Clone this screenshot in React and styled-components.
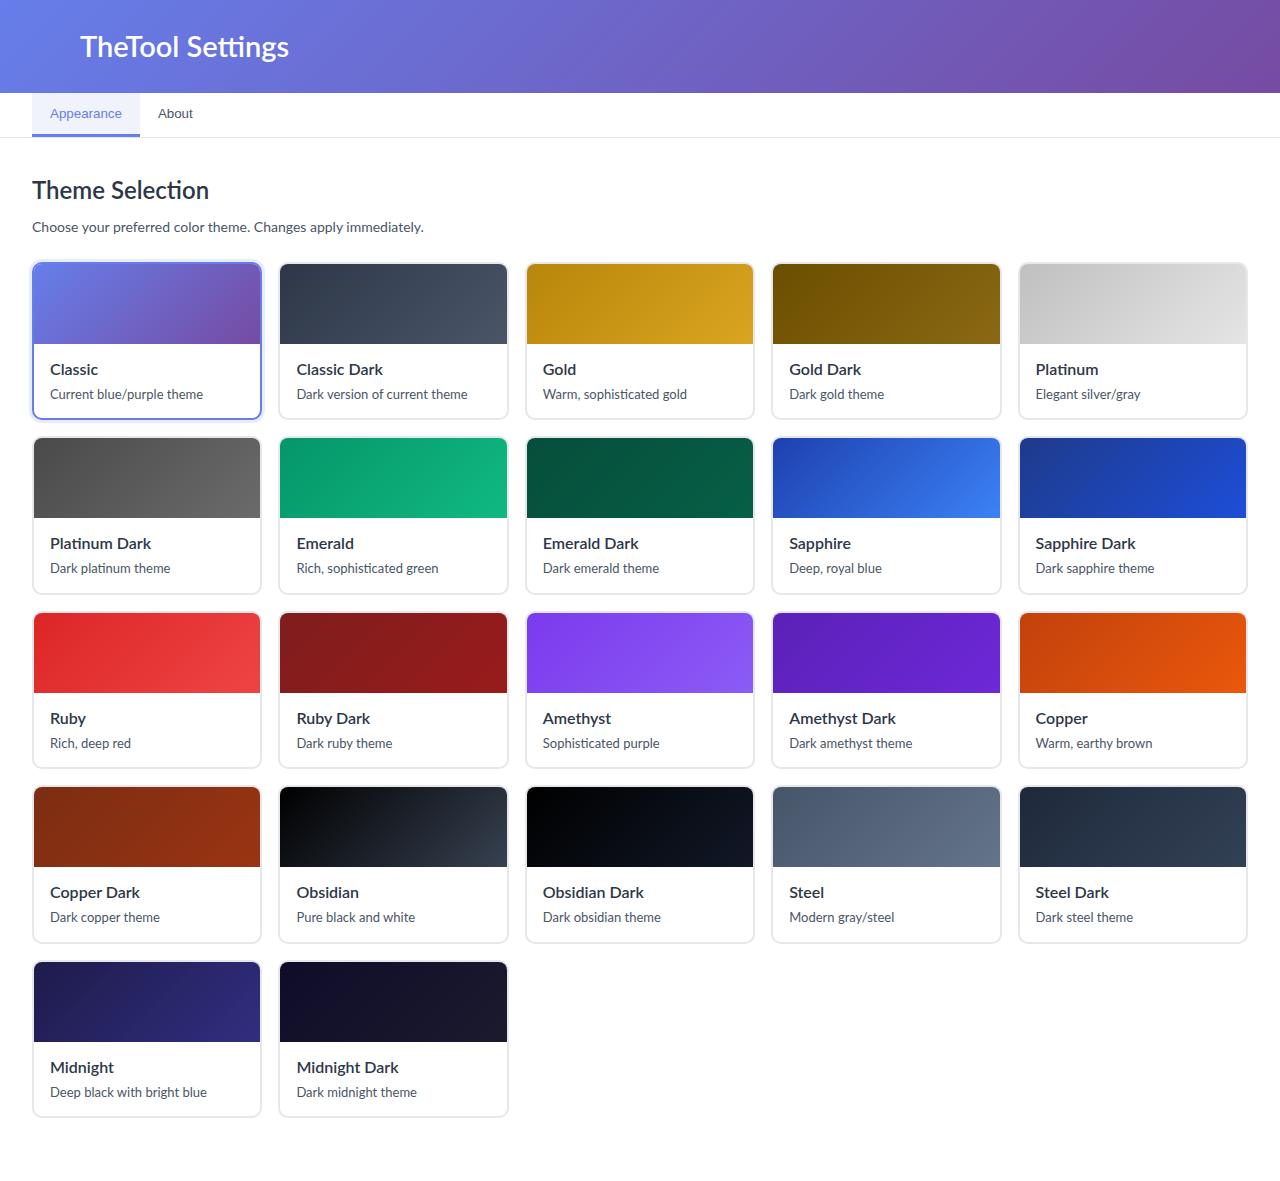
import React, { useState } from 'react';
import styled, { createGlobalStyle } from 'styled-components';

const GlobalStyle = createGlobalStyle`
  * {
    box-sizing: border-box;
  }

  body {
    margin: 0;
    background: #ffffff;
    font-family: 'Segoe UI', Lato, 'Open Sans', sans-serif;
    line-height: 1.33;
    color: #2d3748;
  }
`;

const themes = [
  { id: 'classic', name: 'Classic', description: 'Current blue/purple theme', from: '#667eea', to: '#764ba2' },
  { id: 'classic-dark', name: 'Classic Dark', description: 'Dark version of current theme', from: '#2d3748', to: '#4a5568' },
  { id: 'gold', name: 'Gold', description: 'Warm, sophisticated gold', from: '#b8860b', to: '#daa520' },
  { id: 'gold-dark', name: 'Gold Dark', description: 'Dark gold theme', from: '#6b4e00', to: '#8b6914' },
  { id: 'platinum', name: 'Platinum', description: 'Elegant silver/gray', from: '#c0c0c0', to: '#e5e5e5' },
  { id: 'platinum-dark', name: 'Platinum Dark', description: 'Dark platinum theme', from: '#4a4a4a', to: '#6b6b6b' },
  { id: 'emerald', name: 'Emerald', description: 'Rich, sophisticated green', from: '#059669', to: '#10b981' },
  { id: 'emerald-dark', name: 'Emerald Dark', description: 'Dark emerald theme', from: '#064e3b', to: '#065f46' },
  { id: 'sapphire', name: 'Sapphire', description: 'Deep, royal blue', from: '#1e40af', to: '#3b82f6' },
  { id: 'sapphire-dark', name: 'Sapphire Dark', description: 'Dark sapphire theme', from: '#1e3a8a', to: '#1d4ed8' },
  { id: 'ruby', name: 'Ruby', description: 'Rich, deep red', from: '#dc2626', to: '#ef4444' },
  { id: 'ruby-dark', name: 'Ruby Dark', description: 'Dark ruby theme', from: '#7f1d1d', to: '#991b1b' },
  { id: 'amethyst', name: 'Amethyst', description: 'Sophisticated purple', from: '#7c3aed', to: '#8b5cf6' },
  { id: 'amethyst-dark', name: 'Amethyst Dark', description: 'Dark amethyst theme', from: '#5b21b6', to: '#6d28d9' },
  { id: 'copper', name: 'Copper', description: 'Warm, earthy brown', from: '#c2410c', to: '#ea580c' },
  { id: 'copper-dark', name: 'Copper Dark', description: 'Dark copper theme', from: '#7c2d12', to: '#9a3412' },
  { id: 'obsidian', name: 'Obsidian', description: 'Pure black and white', from: '#000000', to: '#374151' },
  { id: 'obsidian-dark', name: 'Obsidian Dark', description: 'Dark obsidian theme', from: '#000000', to: '#111827' },
  { id: 'steel', name: 'Steel', description: 'Modern gray/steel', from: '#475569', to: '#64748b' },
  { id: 'steel-dark', name: 'Steel Dark', description: 'Dark steel theme', from: '#1e293b', to: '#334155' },
  { id: 'midnight', name: 'Midnight', description: 'Deep black with bright blue', from: '#1e1b4b', to: '#312e81' },
  { id: 'midnight-dark', name: 'Midnight Dark', description: 'Dark midnight theme', from: '#0f0c29', to: '#1c1a2e' },
];

const Header = styled.header`
  height: 93px;
  padding: 0 80px;
  display: flex;
  align-items: center;
  background: linear-gradient(135deg, #667eea 0%, #764ba2 100%);
`;

const Title = styled.h1`
  margin: 0;
  font-size: 29px;
  font-weight: 600;
  color: #ffffff;
`;

const TabBar = styled.nav`
  display: flex;
  padding: 0 32px;
  border-bottom: 1px solid #e2e8f0;
`;

const Tab = styled.button`
  height: 44px;
  padding: 0 18px;
  border: none;
  border-bottom: 3px solid ${p => (p.$active ? '#667eea' : 'transparent')};
  background: ${p => (p.$active ? '#f0f3fc' : 'transparent')};
  color: ${p => (p.$active ? '#667eea' : '#4a5568')};
  font-family: 'Liberation Sans', Arial, sans-serif;
  font-size: 13.33px;
  cursor: pointer;
`;

const Content = styled.main`
  padding: 36px 32px 32px;
`;

const SectionTitle = styled.h2`
  margin: 0 0 12px;
  font-size: 24px;
  font-weight: 600;
  color: #2d3748;
`;

const SectionText = styled.p`
  margin: 0 0 25px;
  font-size: 14px;
  color: #4a5568;
`;

const Grid = styled.div`
  display: grid;
  grid-template-columns: repeat(5, 1fr);
  column-gap: 16px;
  row-gap: 16px;
`;

const Card = styled.div`
  border: 2px solid ${p => (p.$selected ? '#667eea' : '#e5e7eb')};
  border-radius: 10px;
  overflow: hidden;
  background: #ffffff;
  box-shadow: ${p => (p.$selected ? '0 0 0 3px rgba(102, 126, 234, 0.15)' : 'none')};
  cursor: pointer;
`;

const Preview = styled.div`
  height: 80px;
  background: linear-gradient(135deg, ${p => p.$from} 0%, ${p => p.$to} 100%);
`;

const CardBody = styled.div`
  padding: 14px 16px 15px;
`;

const CardName = styled.div`
  font-size: 16px;
  font-weight: 600;
  color: #2d3748;
  margin-bottom: 7px;
`;

const CardDesc = styled.div`
  font-size: 13px;
  color: #4a5568;
`;

export default function App() {
  const [tab, setTab] = useState('appearance');
  const [selected, setSelected] = useState('classic');

  return (
    <>
      <GlobalStyle />
      <Header>
        <Title>TheTool Settings</Title>
      </Header>
      <TabBar>
        <Tab $active={tab === 'appearance'} onClick={() => setTab('appearance')}>Appearance</Tab>
        <Tab $active={tab === 'about'} onClick={() => setTab('about')}>About</Tab>
      </TabBar>
      <Content>
        <SectionTitle>Theme Selection</SectionTitle>
        <SectionText>Choose your preferred color theme. Changes apply immediately.</SectionText>
        <Grid>
          {themes.map(theme => (
            <Card key={theme.id} $selected={selected === theme.id} onClick={() => setSelected(theme.id)}>
              <Preview $from={theme.from} $to={theme.to} />
              <CardBody>
                <CardName>{theme.name}</CardName>
                <CardDesc>{theme.description}</CardDesc>
              </CardBody>
            </Card>
          ))}
        </Grid>
      </Content>
    </>
  );
}
